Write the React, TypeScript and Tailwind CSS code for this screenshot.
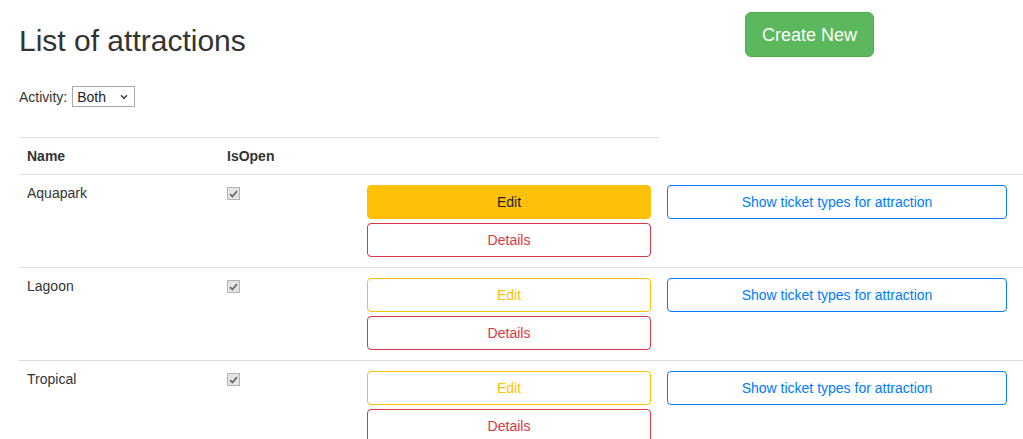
import React from 'react';

interface Attraction {
  name: string;
  isOpen: boolean;
}

const attractions: Attraction[] = [
  { name: 'Aquapark', isOpen: true },
  { name: 'Lagoon', isOpen: true },
  { name: 'Tropical', isOpen: true },
];

const CheckBox: React.FC<{ checked: boolean }> = ({ checked }) => (
  <span className="flex items-center justify-center w-[13px] h-[13px] border border-[#b4b4b4] bg-[#e4e4e4]">
    {checked && (
      <svg width="9" height="8" viewBox="0 0 9 8">
        <path d="M1 4.2 L3.4 6.5 L8 1.2" fill="none" stroke="#6b6b6b" strokeWidth="1.8" />
      </svg>
    )}
  </span>
);

const Row: React.FC<{ item: Attraction; first: boolean }> = ({ item, first }) => (
  <div className="grid grid-cols-[200px_140px_300px_1fr] border-t border-[#dddddd] h-[93px]">
    <div className="px-2 py-2 leading-5">{item.name}</div>
    <div className="px-2 pt-[12px]">
      <CheckBox checked={item.isOpen} />
    </div>
    <div className="px-2 pt-[10px] flex flex-col gap-[4px]">
      {first ? (
        <button className="h-[34px] w-full rounded bg-[#ffc107] border border-[#ffc107] text-[#212529] text-sm">
          Edit
        </button>
      ) : (
        <button className="h-[34px] w-full rounded bg-white border border-[#ffc107] text-[#ffc107] text-sm">
          Edit
        </button>
      )}
      <button className="h-[34px] w-full rounded bg-white border border-[#dc3545] text-[#dc3545] text-sm">
        Details
      </button>
    </div>
    <div className="px-2 pt-[10px]">
      <button className="h-[34px] w-[340px] rounded bg-white border border-[#007bff] text-[#007bff] text-sm">
        Show ticket types for attraction
      </button>
    </div>
  </div>
);

export default function App() {
  return (
    <div
      className="min-h-screen bg-white text-[#333333] text-sm pl-[19px] overflow-hidden"
      style={{ fontFamily: '"Liberation Sans", Arial, sans-serif' }}
    >
      <div className="flex items-start h-[57px]">
        <h2 className="w-[726px] mt-[23px] text-[30px] leading-[35px] text-[#333333]">List of attractions</h2>
        <button className="mt-[12px] h-[45px] w-[129px] rounded-md bg-[#5cb85c] border border-[#4cae4c] text-white text-lg">
          Create New
        </button>
      </div>

      <div className="flex items-center gap-[5px] mt-[29px] h-[21px]">
        <span className="leading-5">Activity:</span>
        <div className="flex items-center justify-between w-[63px] h-[21px] border border-[#a9a9a9] bg-white pl-[4px] pr-[6px] text-[#222222]">
          <span className="leading-4">Both</span>
          <svg width="8" height="6" viewBox="0 0 8 6">
            <path d="M1 1.2 L4 4.3 L7 1.2" fill="none" stroke="#444444" strokeWidth="1.5" />
          </svg>
        </div>
      </div>

      <div className="mt-[30px]">
        <div className="grid grid-cols-[200px_140px_300px] w-[640px] border-t border-[#dddddd] h-[37px]">
          <div className="px-2 py-2 leading-5 font-bold">Name</div>
          <div className="px-2 py-2 leading-5 font-bold">IsOpen</div>
          <div />
        </div>
        {attractions.map((a, i) => (
          <Row key={a.name} item={a} first={i === 0} />
        ))}
      </div>
    </div>
  );
}
